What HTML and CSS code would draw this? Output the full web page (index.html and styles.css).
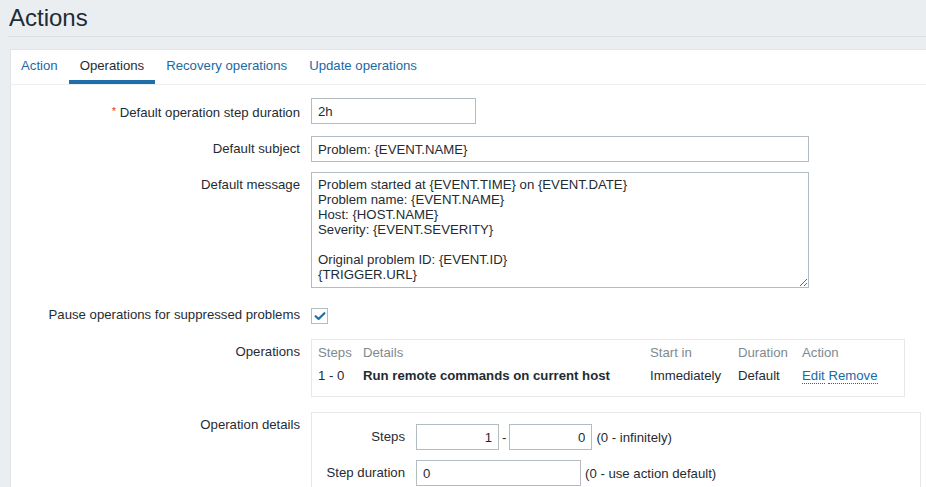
FILE: index.html
```html
<!DOCTYPE html>
<html lang="en">
<head>
<meta charset="utf-8">
<title>Actions</title>
<link rel="stylesheet" href="styles.css">
</head>
<body>
<header class="page-header">
  <h1 class="page-title">Actions</h1>
</header>
<main class="content">
  <section class="card">
    <nav class="tabs">
      <a class="tab">Action</a>
      <a class="tab tab-active">Operations</a>
      <a class="tab">Recovery operations</a>
      <a class="tab">Update operations</a>
    </nav>
    <ul class="form-list">
      <li class="form-row row-gap">
        <label class="form-label"><span class="required">*</span> Default operation step duration</label>
        <div class="form-field"><input class="text-input w-short" type="text" value="2h"></div>
      </li>
      <li class="form-row row-gap">
        <label class="form-label">Default subject</label>
        <div class="form-field"><input class="text-input w-long" type="text" value="Problem: {EVENT.NAME}"></div>
      </li>
      <li class="form-row row-gap-textarea">
        <label class="form-label">Default message</label>
        <div class="form-field"><textarea class="text-area w-long">Problem started at {EVENT.TIME} on {EVENT.DATE}
Problem name: {EVENT.NAME}
Host: {HOST.NAME}
Severity: {EVENT.SEVERITY}

Original problem ID: {EVENT.ID}
{TRIGGER.URL}</textarea></div>
      </li>
      <li class="form-row row-gap-check">
        <label class="form-label">Pause operations for suppressed problems</label>
        <div class="form-field check-field">
          <span class="checkbox">
            <svg viewBox="0 0 16 16" width="16" height="16"><path d="M3.6 8.2 L6.6 11 L12.4 5.2" fill="none" stroke="#1f6ea8" stroke-width="2.2" stroke-linecap="round" stroke-linejoin="round"/></svg>
          </span>
        </div>
      </li>
      <li class="form-row row-gap-ops">
        <label class="form-label">Operations</label>
        <div class="form-field">
          <div class="ops-box">
            <table class="ops-table">
              <thead>
                <tr><th class="c-steps">Steps</th><th class="c-details">Details</th><th class="c-start">Start in</th><th class="c-dur">Duration</th><th class="c-act">Action</th></tr>
              </thead>
              <tbody>
                <tr><td>1 - 0</td><td class="bold">Run remote commands on current host</td><td>Immediately</td><td>Default</td><td><a class="link-action">Edit</a> <a class="link-action">Remove</a></td></tr>
              </tbody>
            </table>
          </div>
        </div>
      </li>
      <li class="form-row">
        <label class="form-label">Operation details</label>
        <div class="form-field">
          <div class="details-box">
            <div class="inner-row inner-gap">
              <label class="inner-label">Steps</label>
              <div class="inner-field">
                <input class="text-input w-step num" type="text" value="1">
                <span class="dash">-</span>
                <input class="text-input w-step num" type="text" value="0">
                <span class="hint">(0 - infinitely)</span>
              </div>
            </div>
            <div class="inner-row">
              <label class="inner-label">Step duration</label>
              <div class="inner-field">
                <input class="text-input w-short" type="text" value="0">
                <span class="hint">(0 - use action default)</span>
              </div>
            </div>
          </div>
        </div>
      </li>
    </ul>
  </section>
</main>
</body>
</html>
```

FILE: styles.css
```css
html, body {
  margin: 0;
  padding: 0;
}
body {
  background: #ebeef0;
  color: #1f2c33;
  font-family: "Liberation Sans", Arial, sans-serif;
  font-size: 13.2px;
  overflow: hidden;
  width: 926px;
  height: 487px;
}
.page-header {
  height: 37px;
  margin-left: 8px;
  border-bottom: 1px solid #dde1e4;
  box-sizing: border-box;
}
.page-title {
  margin: 0;
  padding: 6px 0 0 1px;
  font-size: 24px;
  line-height: 24px;
  font-weight: normal;
  color: #1f2c33;
}
.content {
  padding: 12px 0 0 10px;
}
.card {
  background: #ffffff;
  border: 1px solid #dfe4e7;
  border-right: none;
  height: 600px;
}
.tabs {
  display: flex;
  height: 34px;
  border-bottom: 1px solid #ebeef0;
  padding-left: 0;
  margin-left: -1px;
}
.tab {
  display: block;
  padding: 0 11px;
  height: 34px;
  line-height: 32px;
  box-sizing: border-box;
  border-bottom: 4px solid transparent;
  color: #1a6aa5;
  cursor: pointer;
}
.tab-active {
  color: #1f2c33;
  border-bottom-color: #1f6ea8;
}
.form-list {
  list-style: none;
  margin: 0;
  padding: 13px 0 0 0;
}
.form-row {
  display: grid;
  grid-template-columns: 289px 1fr;
  column-gap: 11px;
  align-items: start;
}
.row-gap { margin-bottom: 10px; }
.row-gap-textarea { margin-bottom: 14px; }
.row-gap-check { margin-bottom: 11px; }
.row-gap-ops { margin-bottom: 15px; }
.form-label {
  text-align: right;
  line-height: 26px;
  white-space: nowrap;
}
.required {
  color: #e33734;
  font-size: 11px;
  vertical-align: 2px;
}
.form-field {
  min-height: 26px;
}
.text-input {
  display: inline-block;
  box-sizing: border-box;
  height: 26px;
  border: 1px solid #b3bcc1;
  padding: 0 6px;
  font-family: "Liberation Sans", Arial, sans-serif;
  font-size: 13.2px;
  color: #1f2c33;
  background: #ffffff;
  margin: 0;
  vertical-align: middle;
  outline: none;
}
.w-short { width: 165px; }
.w-long { width: 498px; }
.w-step { width: 83px; }
.num { text-align: right; }
.text-area {
  display: block;
  box-sizing: border-box;
  height: 116px;
  border: 1px solid #b3bcc1;
  padding: 4px 6px;
  margin: 0;
  font-family: "Liberation Sans", Arial, sans-serif;
  font-size: 13.2px;
  line-height: 15px;
  color: #1f2c33;
  resize: both;
  outline: none;
}
.check-field {
  display: flex;
  align-items: center;
  height: 26px;
}
.checkbox {
  display: block;
  box-sizing: border-box;
  width: 17px;
  height: 16px;
  border: 1px solid #b3bcc1;
  margin-top: 1px;
}
.checkbox svg {
  display: block;
  margin: -1px 0 0 0;
}
.ops-box {
  box-sizing: border-box;
  width: 594px;
  border: 1px solid #e4e8ea;
  padding: 1px 0 9px 6px;
}
.ops-table {
  border-collapse: collapse;
}
.ops-table th,
.ops-table td {
  padding: 0;
  height: 23px;
  line-height: 23px;
  text-align: left;
  white-space: nowrap;
  vertical-align: middle;
}
.ops-table th {
  font-weight: normal;
  color: #7e8a90;
}
.c-steps { width: 45px; }
.c-details { width: 287px; }
.c-start { width: 88px; }
.c-dur { width: 64px; }
.bold { font-weight: bold; }
.link-action {
  color: #1a6aa5;
  border-bottom: 1px dotted #1a6aa5;
  line-height: 14px;
  display: inline-block;
  cursor: pointer;
}
.details-box {
  box-sizing: border-box;
  width: 610px;
  border: 1px solid #e4e8ea;
  padding-top: 11px;
  height: 90px;
}
.inner-row {
  display: grid;
  grid-template-columns: 93px 1fr;
  column-gap: 11px;
  align-items: center;
}
.inner-gap { margin-bottom: 10px; }
.inner-label {
  text-align: right;
  line-height: 26px;
  white-space: nowrap;
}
.inner-field {
  display: flex;
  align-items: center;
  height: 26px;
}
.dash {
  margin: 0 3px;
}
.hint {
  margin-left: 4px;
  white-space: nowrap;
}
```
